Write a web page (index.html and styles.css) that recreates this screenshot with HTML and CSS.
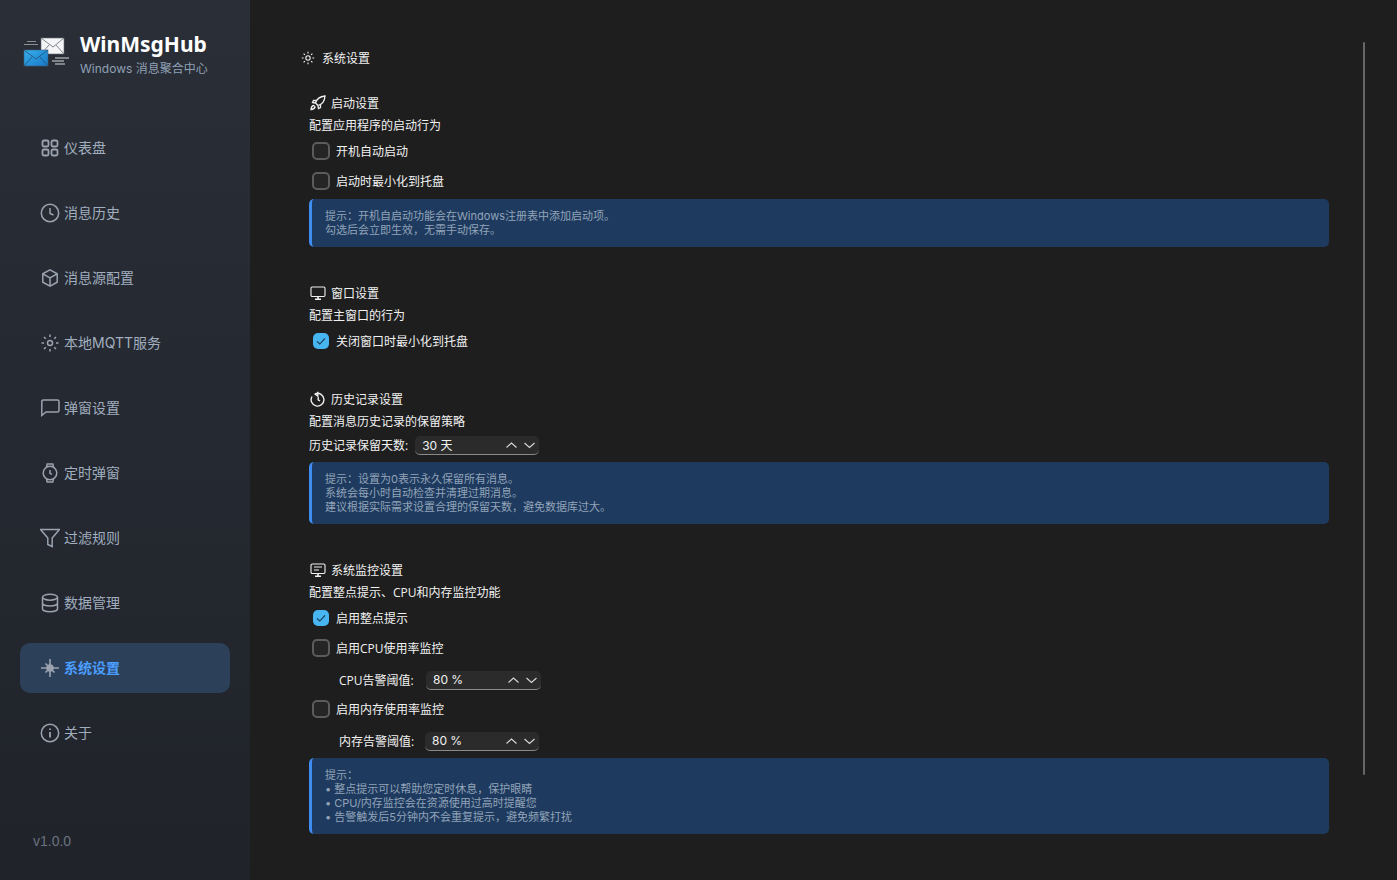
FILE: index.html
```html
<!DOCTYPE html>
<html lang="zh-CN">
<head>
<meta charset="utf-8">
<title>WinMsgHub</title>
<link rel="stylesheet" href="styles.css">
</head>
<body>
<div class="app">
  <aside class="sidebar">
    <div class="brand">
      <svg class="logo" viewBox="0 0 48 34" width="48" height="34">
        <defs><linearGradient id="blue" x1="0" y1="0" x2="1" y2="1"><stop offset="0" stop-color="#35b0ee"/><stop offset="1" stop-color="#1877c4"/></linearGradient></defs>
        <path d="M5 4.500h9M2 7.500h14" stroke="#8a8f96" stroke-width="1.200" fill="none"/>
        <rect x="19" y="1" width="23" height="16" fill="#f4f5f6" stroke="#666b72" stroke-width=".6"/>
        <path d="M19 1l12 9 11-9M19 17l8-9M42 17l-8-9" stroke="#666b72" stroke-width=".8" fill="none"/>
        <rect x="2" y="13" width="24" height="16" fill="url(#blue)" stroke="#3c5f7c" stroke-width=".6"/>
        <path d="M2 13l12 9 12-9M2 29l8-9M26 29l-8-9" stroke="#25506f" stroke-width=".8" fill="none"/>
        <path d="M33 21h14M30 24h12M33 27h10" stroke="#d8dadd" stroke-width="1" fill="none"/>
      </svg>
      <div class="brand-text">
        <div class="brand-name">WinMsgHub</div>
        <div class="brand-sub">Windows 消息聚合中心</div>
      </div>
    </div>
    <nav class="nav">
      <a class="nav-item"><svg class="nav-icon nav-icon-bold" viewBox="0 0 20 20"><rect x="2.500" y="2.500" width="6" height="6" rx="1.500"/><rect x="11.500" y="2.500" width="6" height="6" rx="1.500"/><rect x="2.500" y="11.500" width="6" height="6" rx="1.500"/><rect x="11.500" y="11.500" width="6" height="6" rx="1.500"/></svg><span>仪表盘</span></a>
      <a class="nav-item"><svg class="nav-icon" viewBox="0 0 20 20"><circle cx="10" cy="10" r="8.700"/><path d="M10 5v5.500l3.500 1.500"/></svg><span>消息历史</span></a>
      <a class="nav-item"><svg class="nav-icon" viewBox="0 0 20 20"><path d="M10 1.800l7.200 4v8.400l-7.200 4-7.200-4V5.800zM2.800 5.800L10 10l7.200-4.200M10 10v8.200"/></svg><span>消息源配置</span></a>
      <a class="nav-item"><svg class="nav-icon" viewBox="0 0 20 20"><circle cx="10" cy="10" r="2.500"/><path d="M10 1.500v2.500M10 16v2.500M1.500 10H4M16 10h2.500M4 4l1.800 1.800M14.200 14.200L16 16M4 16l1.800-1.800M14.200 5.800L16 4"/></svg><span>本地MQTT服务</span></a>
      <a class="nav-item"><svg class="nav-icon" viewBox="0 0 20 20"><path d="M3.500 2h14a1.500 1.500 0 0 1 1.500 1.500v9a1.500 1.500 0 0 1-1.500 1.500H6L1.800 17.500V3.500A1.500 1.500 0 0 1 3.500 2z"/></svg><span>弹窗设置</span></a>
      <a class="nav-item"><svg class="nav-icon" viewBox="0 0 20 20"><circle cx="10" cy="10" r="6.800"/><path d="M6.500 4l.7-3h5.600l.7 3M6.500 16l.7 3h5.600l.7-3M10 7v3.300l2 1"/></svg><span>定时弹窗</span></a>
      <a class="nav-item"><svg class="nav-icon" viewBox="0 0 20 20"><path d="M.6 1.500h18.800l-7.200 8.500v8.500l-4.400-2V10z"/></svg><span>过滤规则</span></a>
      <a class="nav-item"><svg class="nav-icon" viewBox="0 0 20 20"><ellipse cx="10" cy="4.200" rx="7.500" ry="3"/><path d="M2.500 4.200v11.600c0 1.700 3.400 3 7.500 3s7.500-1.300 7.500-3V4.200M2.500 10c0 1.700 3.400 3 7.500 3s7.500-1.300 7.500-3"/></svg><span>数据管理</span></a>
      <a class="nav-item active"><svg class="nav-icon" viewBox="0 0 20 20"><circle cx="10" cy="10" r="3" fill="#9aa3af"/><path d="M10 1v6M10 13v6M1 10h6M13 10h6M5.500 5.500l2.500 2.500M12 12l2.500 2.500M5.500 14.500L8 12" stroke-width="1.600"/></svg><span>系统设置</span></a>
      <a class="nav-item"><svg class="nav-icon" viewBox="0 0 20 20"><circle cx="10" cy="10" r="8.700"/><path d="M10 9v5.500M10 5.500v1.500" stroke-width="1.800"/></svg><span>关于</span></a>
    </nav>
    <div class="version">v1.0.0</div>
  </aside>
  <main class="main">
    <header class="page-title">
      <svg class="sec-icon" viewBox="0 0 14 14"><circle cx="7" cy="7" r="2.200"/><path d="M7 .8v1.800M7 11.400v1.800M.8 7h1.800M11.400 7h1.800M2.600 2.600l1.300 1.300M10.100 10.100l1.300 1.300M2.600 11.400l1.300-1.300M10.100 3.900l1.300-1.300"/></svg>
      <span>系统设置</span>
    </header>

    <section class="section section-first">
      <h2 class="sec-head"><svg class="sec-icon sec-icon-lg" viewBox="0 0 16 16"><path d="M5.500 8C6.500 4.500 10 1.500 15 1c-.3 5-3.500 8.500-7 9.500L5.500 8zM5.800 5.500H3.500L2.500 7.500 5 8M10.500 10v2.500l-2 1L8 11M3.500 10.500c-1.500.3-2.300 1.700-2.500 4 2.300-.2 3.700-1 4-2.500-.2-.8-.8-1.300-1.500-1.500z" stroke-width="1.300"/></svg><span>启动设置</span></h2>
      <p class="desc">配置应用程序的启动行为</p>
      <label class="check"><span class="box"></span><span>开机自动启动</span></label>
      <label class="check"><span class="box"></span><span>启动时最小化到托盘</span></label>
      <div class="hint">提示：开机自启动功能会在Windows注册表中添加启动项。<br>勾选后会立即生效，无需手动保存。</div>
    </section>

    <section class="section section-b">
      <h2 class="sec-head"><svg class="sec-icon sec-icon-lg" viewBox="0 0 16 16"><rect x="1" y="2" width="14" height="9.500" rx="1.200"/><path d="M8 11.500v2.500M5 14.300h6" stroke-width="1.600"/></svg><span>窗口设置</span></h2>
      <p class="desc">配置主窗口的行为</p>
      <label class="check"><span class="box on"><svg viewBox="0 0 16 16"><path d="M4 8.300l2.800 2.700L12 5.300"/></svg></span><span>关闭窗口时最小化到托盘</span></label>
    </section>

    <section class="section section-c">
      <h2 class="sec-head"><svg class="sec-icon sec-icon-lg" viewBox="0 0 16 16"><path d="M5.300 2.700A6.400 6.400 0 1 1 2 5.500M7.800.8v4.400L4.500 2.700M8.200 6.200v2.600l1.800 1.200" stroke-width="1.400"/></svg><span>历史记录设置</span></h2>
      <p class="desc">配置消息历史记录的保留策略</p>
      <div class="field field-top">
        <span>历史记录保留天数:</span>
        <div class="spin spin-a"><span class="spin-val">30 天</span><svg class="arrows" viewBox="0 0 29 8"><path d="M.5 6.500L5.500 2l5 4.500M18.500 2l5 4.500 5-4.500"/></svg></div>
      </div>
      <div class="hint hint-gap">提示：设置为0表示永久保留所有消息。<br>系统会每小时自动检查并清理过期消息。<br>建议根据实际需求设置合理的保留天数，避免数据库过大。</div>
    </section>

    <section class="section section-b">
      <h2 class="sec-head"><svg class="sec-icon sec-icon-lg" viewBox="0 0 16 16"><rect x="1" y="2" width="14" height="9.500" rx="1.200"/><path d="M8 11.500v2.500M5 14.300h6" stroke-width="1.600"/><path d="M4 5h8M4 8h5"/></svg><span>系统监控设置</span></h2>
      <p class="desc">配置整点提示、CPU和内存监控功能</p>
      <label class="check"><span class="box on"><svg viewBox="0 0 16 16"><path d="M4 8.300l2.800 2.700L12 5.300"/></svg></span><span>启用整点提示</span></label>
      <label class="check"><span class="box"></span><span>启用CPU使用率监控</span></label>
      <div class="field field-sub">
        <span class="sub-label sub-cpu">CPU告警阈值:</span>
        <div class="spin spin-b"><span class="spin-val">80 %</span><svg class="arrows" viewBox="0 0 29 8"><path d="M.5 6.500L5.500 2l5 4.500M18.500 2l5 4.500 5-4.500"/></svg></div>
      </div>
      <label class="check"><span class="box"></span><span>启用内存使用率监控</span></label>
      <div class="field field-sub">
        <span class="sub-label sub-mem">内存告警阈值:</span>
        <div class="spin spin-c"><span class="spin-val">80 %</span><svg class="arrows" viewBox="0 0 29 8"><path d="M.5 6.500L5.500 2l5 4.500M18.500 2l5 4.500 5-4.500"/></svg></div>
      </div>
      <div class="hint">提示：<br>• 整点提示可以帮助您定时休息，保护眼睛<br>• CPU/内存监控会在资源使用过高时提醒您<br>• 告警触发后5分钟内不会重复提示，避免频繁打扰</div>
    </section>
    <div class="scrollbar"></div>
  </main>
</div>
</body>
</html>
```
FILE: styles.css
```css
* { box-sizing: border-box; }
html, body { margin: 0; height: 100%; }
body {
  font-family: "Open Sans", "Noto Sans CJK SC", sans-serif;
  font-size: 12px;
  color: #f2f2f2;
  background: #1e1e1e;
  overflow: hidden;
}
.app { display: flex; height: 880px; }

.sidebar {
  width: 250px;
  flex: none;
  display: flex;
  flex-direction: column;
  background: linear-gradient(180deg, #2a2e37 0%, #20232a 100%);
}
.brand { display: flex; gap: 10px; padding: 29px 0 0 22px; height: 123px; align-items: flex-start; }
.logo { margin-top: 8px; flex: none; }
.brand-name { font-family: "Noto Sans", sans-serif; font-size: 21px; line-height: 30px; font-weight: 700; color: #fff; }
.brand-sub { font-family: "Inter", "Noto Sans CJK SC", sans-serif; font-size: 12px; line-height: 18px; margin-top: 1px; color: #8ea0b4; }
.nav { display: flex; flex-direction: column; gap: 15px; padding: 0 20px; }
.nav-item {
  display: flex;
  align-items: center;
  gap: 4px;
  height: 50px;
  padding: 0 0 2px 20px;
  border-radius: 10px;
  font-family: "Inter", "Noto Sans CJK SC", sans-serif;
  font-size: 14px;
  color: #a0aebf;
}
.nav-item.active { background: #2c4059; color: #4a9eff; font-weight: 700; }
.nav-icon { width: 20px; height: 20px; margin-top: 2px; flex: none; fill: none; stroke: #9aa3af; stroke-width: 1.500; }
.nav-icon-bold { stroke-width: 1.800; }
.version { margin-top: auto; padding: 0 0 29px 33px; font-family: "Liberation Sans", sans-serif; font-size: 14px; line-height: 20px; color: #6b7280; }

.main { position: relative; flex: 1; padding: 47px 68px 0 51px; }
.page-title { display: flex; align-items: center; gap: 7px; height: 22px; }
.sec-icon { width: 14px; height: 14px; flex: none; fill: none; stroke: #f0f0f0; stroke-width: 1.100; }
.sec-icon-lg { width: 16px; height: 16px; }

.section { margin-left: 8px; }
.section-first { margin-top: 23px; }
.section-b { margin-top: 35px; }
.section-c { margin-top: 32px; }
.sec-head { display: flex; align-items: center; gap: 5px; height: 22px; margin: 0; font-size: 12px; font-weight: 400; padding-left: 1px; }
.desc { margin: 0; height: 22px; line-height: 24px; }

.check { display: flex; align-items: center; gap: 6px; height: 30px; padding-left: 3px; }
.box { width: 18px; height: 18px; flex: none; border: 2px solid #5c5c5c; border-radius: 5px; background: #252525; }
.box.on { width: 16px; height: 16px; margin: 0 1px; border: 0; background: #47b5f0; }
.box svg { display: block; width: 16px; height: 16px; fill: none; stroke: #17384d; stroke-width: 1.100; }

.field { display: flex; align-items: center; }
.field-top { height: 24px; margin-top: 1px; gap: 7px; }
.field-sub { height: 31px; padding-top: 3px; }
.sub-label { padding-left: 30px; }
.sub-cpu { width: 117px; }
.sub-mem { width: 116px; }
.spin {
  display: flex;
  align-items: center;
  justify-content: space-between;
  height: 19px;
  padding: 0 1px 0 7px;
  border-radius: 5px;
  background: #2b2b2b;
  border-bottom: 1px solid #8a8a8a;
}
.spin-val { font-family: "Inter", "Noto Sans CJK SC", sans-serif; }
.spin-a { width: 124px; }
.spin-b { width: 115px; }
.spin-c { width: 114px; }
.arrows { width: 29px; height: 8px; margin-right: 3px; fill: none; stroke: #d8d8d8; stroke-width: 1.100; }

.hint {
  margin-top: 3px;
  padding: 10px 14px 10px 13px;
  border-left: 3px solid #3f8df0;
  border-radius: 5px;
  background: #1e3a5f;
  font-family: "Inter", "Noto Sans CJK SC", sans-serif;
  font-size: 11px;
  line-height: 14px;
  color: #92a4b8;
}
.hint-gap { margin-top: 5px; }

.scrollbar { position: absolute; left: 1113px; top: 42px; width: 2px; height: 733px; background: #666; border-radius: 1px; }
```
